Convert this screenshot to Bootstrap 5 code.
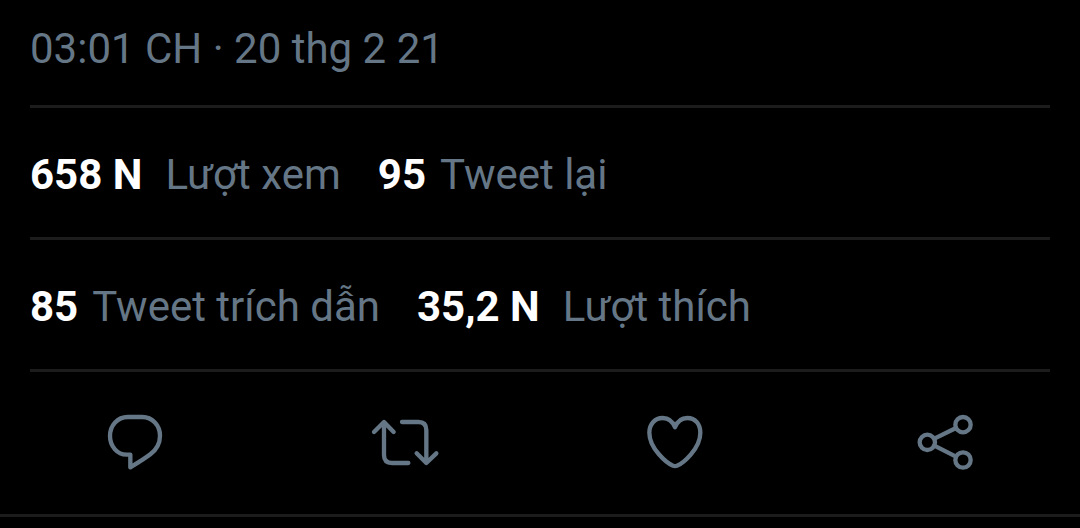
<!DOCTYPE html>
<html lang="vi">
<head>
<meta charset="utf-8">
<meta name="viewport" content="width=device-width, initial-scale=1">
<title>Tweet</title>
<link href="https://cdn.jsdelivr.net/npm/bootstrap@5.3.0/dist/css/bootstrap.min.css" rel="stylesheet">
<style>
  body { background: #000; color: #657786; font-family: Roboto, "Noto Sans", sans-serif; font-size: 42px; line-height: 48px; }
  .inset { margin: 0 30px; }
  .ruled { border-bottom: 3px solid #1c1c1c; }
  .stamp { padding: 25px 0 32px; }
  .stats { padding: 43px 0 38px; column-gap: 37px; }
  .stat { display: flex; column-gap: 14px; color: inherit; text-decoration: none; }
  .stat strong { color: #fff; font-weight: 700; }
  .stat .with-unit { padding-right: 9px; }
  .actions { padding: 28px 0 34px; }
  .action { color: inherit; line-height: 0; }
  .action svg { width: 90px; height: 80px; fill: none; stroke: currentColor; stroke-width: 13; stroke-linecap: round; stroke-linejoin: round; }
</style>
</head>
<body>
<main class="ruled">
  <div class="inset ruled stamp"><time datetime="2021-02-20T15:01">03:01 CH · 20 thg 2 21</time></div>
  <div class="inset ruled stats d-flex flex-wrap">
    <a class="stat" href="#views"><strong class="with-unit">658 N</strong><span>Lượt xem</span></a>
    <a class="stat" href="#retweets"><strong>95</strong><span>Tweet lại</span></a>
  </div>
  <div class="inset ruled stats d-flex flex-wrap">
    <a class="stat" href="#quotes"><strong>85</strong><span>Tweet trích dẫn</span></a>
    <a class="stat" href="#likes"><strong class="with-unit">35,2 N</strong><span>Lượt thích</span></a>
  </div>
  <div class="actions row g-0 text-center">
    <div class="col"><button type="button" class="action btn border-0 p-0" aria-label="Trả lời">
      <svg viewBox="0 0 270 240"><path d="M121 202V164H110C81 164 60 138 60 108C60 76 83 51 113 51H157C187 51 210 76 210 107C210 132 199 149 181 163C163 177 141 190 121 202Z"/></svg>
    </button></div>
    <div class="col"><button type="button" class="action btn border-0 p-0" aria-label="Tweet lại">
      <svg viewBox="0 0 270 240"><path d="M42 96L72 66L101 96M72 68V165Q72 189 96 189H145M126 66H175Q199 66 199 90V187M170 160L199 189L229 160"/></svg>
    </button></div>
    <div class="col"><button type="button" class="action btn border-0 p-0" aria-label="Thích">
      <svg viewBox="0 0 270 240"><path d="M135 82C128 64 114 54 98 54C74 54 58 73 58 98C58 146 111 190 129 197Q135 200 141 197C159 190 211 146 211 98C211 73 196 54 172 54C156 54 142 64 135 82Z"/></svg>
    </button></div>
    <div class="col"><button type="button" class="action btn border-0 p-0" aria-label="Chia sẻ">
      <svg viewBox="0 0 270 240"><circle cx="82" cy="127" r="23"/><circle cx="189" cy="74" r="23"/><circle cx="189" cy="180" r="23"/><path d="M103 116L168 84M103 137L168 170"/></svg>
    </button></div>
  </div>
</main>
<script src="https://cdn.jsdelivr.net/npm/bootstrap@5.3.0/dist/js/bootstrap.bundle.min.js"></script>
</body>
</html>
